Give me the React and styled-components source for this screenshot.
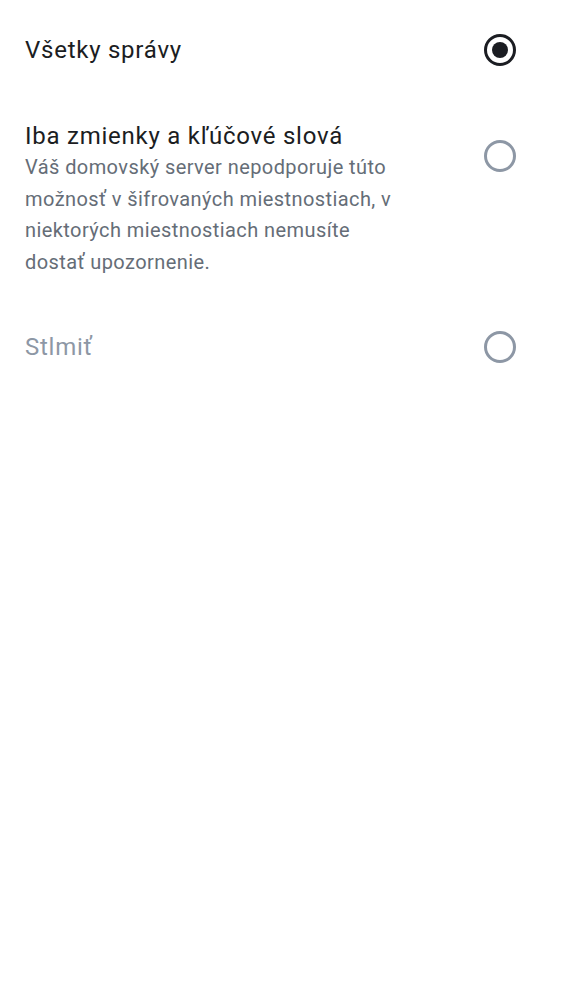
import React from 'react';
import styled, { createGlobalStyle } from 'styled-components';

const GlobalStyle = createGlobalStyle`
  body {
    margin: 0;
    background: #ffffff;
    font-family: 'Roboto', 'Noto Sans', sans-serif;
  }
`;

const List = styled.div`
  display: flex;
  flex-direction: column;
  width: 100%;
`;

const Row = styled.label`
  display: flex;
  flex-direction: row;
  align-items: ${(p) => (p.$top ? 'flex-start' : 'center')};
  justify-content: space-between;
  min-height: ${(p) => (p.$top ? 'auto' : '100px')};
  padding: ${(p) => (p.$top ? '20px 46px 18px 25px' : '0 46px 0 25px')};
  box-sizing: border-box;
`;

const Texts = styled.div`
  display: flex;
  flex-direction: column;
  width: 382px;
`;

const Title = styled.div`
  font-size: 24px;
  line-height: 32px;
  letter-spacing: 0.75px;
  white-space: nowrap;
  color: ${(p) => (p.$disabled ? '#8d97a5' : '#1b1d22')};
`;

const Description = styled.div`
  font-size: 20px;
  line-height: 31.7px;
  letter-spacing: 0.42px;
  color: #656d77;
`;

const Radio = styled.span`
  flex: none;
  display: flex;
  align-items: center;
  justify-content: center;
  width: 26px;
  height: 26px;
  border-radius: 50%;
  border: 3px solid ${(p) => (p.$checked ? '#1b1d22' : '#8d97a5')};
  margin-top: ${(p) => (p.$top ? '20px' : '0')};

  &::after {
    content: '';
    display: ${(p) => (p.$checked ? 'block' : 'none')};
    width: 16px;
    height: 16px;
    border-radius: 50%;
    background: #1b1d22;
  }
`;

const App = () => {
  return (
    <>
      <GlobalStyle />
      <List>
        <Row>
          <Texts>
            <Title>Všetky správy</Title>
          </Texts>
          <Radio $checked />
        </Row>
        <Row $top>
          <Texts>
            <Title>Iba zmienky a kľúčové slová</Title>
            <Description>
              Váš domovský server nepodporuje túto možnosť v šifrovaných
              miestnostiach, v niektorých miestnostiach nemusíte dostať
              upozornenie.
            </Description>
          </Texts>
          <Radio $top />
        </Row>
        <Row>
          <Texts>
            <Title $disabled>Stlmiť</Title>
          </Texts>
          <Radio />
        </Row>
      </List>
    </>
  );
};

export default App;
